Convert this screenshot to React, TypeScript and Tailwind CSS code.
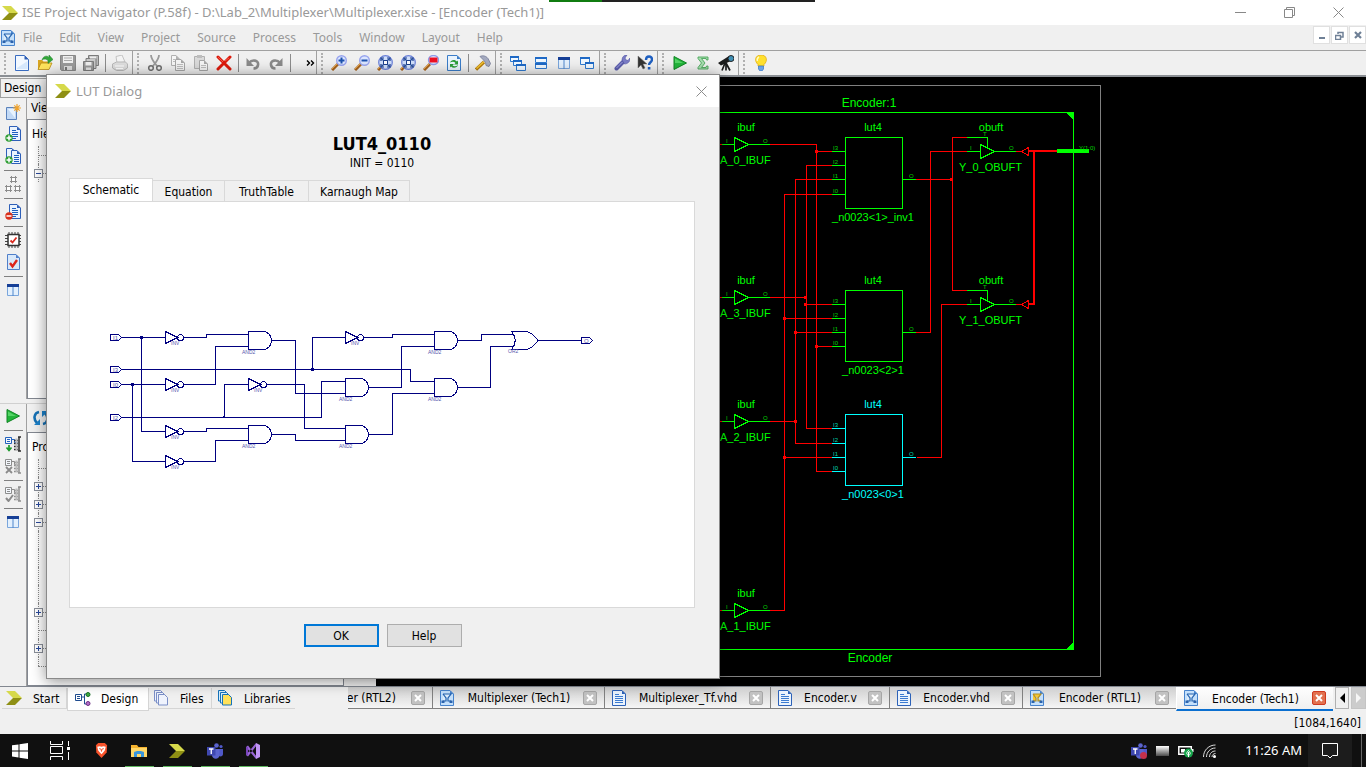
import React from "react";

type Kids = { children?: React.ReactNode };

const UI = "font-['DejaVu_Sans_Condensed','DejaVu_Sans',sans-serif] text-xs";
const SEGOE = "font-['Noto_Sans','Open_Sans',sans-serif]";

/* ---------- icons ---------- */

function Ico({ children, size = 16 }: Kids & { size?: number }) {
  return (
    <svg width={size} height={size} viewBox="0 0 16 16" fill="none" aria-hidden="true" className="shrink-0">
      {children}
    </svg>
  );
}

const Chevron = () => (
  <Ico>
    <path d="M0 1h9l7 7H7z" fill="#d6d94a" />
    <path d="M7 8h9l-7 7H0z" fill="#8e8f14" />
  </Ico>
);

const Page = ({ x = 2, y = 0, w = 12, h = 16, stroke = "#2e5fb8", fill = "#eaf3fd" }) => (
  <>
    <path d={`M${x + 0.5} ${y + 0.5}h${w - 4.5}l3.5 3.5v${h - 4.5}h-${w - 1}z`} fill={fill} stroke={stroke} />
    <path d={`M${x + w - 4} ${y + 0.5}v3.5h3.5z`} fill={stroke} />
  </>
);

const NewFile = () => (
  <Ico>
    <path d="M1.5.5h9l4 4v11h-13z" fill="#f2f8ff" stroke="#3a6cc0" />
    <path d="M3 14h10.500V6L3 13z" fill="#d5e7fb" />
    <path d="M10.500.5v4h4z" fill="#2f5fb5" />
  </Ico>
);
const OpenFile = () => (
  <Ico>
    <path d="M1 14V5h4l1.500 1.500H12V14z" fill="#d9a520" />
    <path d="M1 14.500 4 8h11l-3 6.500z" fill="#ffe45c" stroke="#b88a14" strokeWidth=".8" />
    <path d="M5 5c1-4 5-5 7-2.500V0l4 4.500L11 8.500V5.500C9.500 4 7 3.500 5 5z" fill="#32a83a" stroke="#1d7a28" strokeWidth=".5" />
  </Ico>
);
const Save = () => (
  <Ico>
    <path d="M.5.5h15v15h-14l-1-1z" fill="#9a9a9a" stroke="#888" />
    <path d="M3 1h10v7H3z" fill="#f0f0f0" />
    <path d="M4 3h8M4 5.500h8" stroke="#aaa" />
    <path d="M4 11h8v4H4z" fill="#dcdcdc" />
    <path d="M5 12h2v3H5z" fill="#777" />
  </Ico>
);
const SaveAll = () => (
  <Ico>
    <path d="M5.500.5h10v10h-10z" fill="#bbb" stroke="#7c7c7c" />
    <path d="M3 3.500h10v10H3z" fill="#c9c9c9" stroke="#7c7c7c" />
    <path d="M.5 6.500h10v9H.5z" fill="#999" stroke="#7c7c7c" />
    <path d="M2.500 7h6v3.500h-6zM7 1.500h6v2H7z" fill="#eee" />
    <path d="M3 12.500h5V15H3z" fill="#e2e2e2" />
  </Ico>
);
const Print = () => (
  <Ico>
    <path d="M4 1.500 10 0l3 7-8 1z" fill="#f4f4f4" stroke="#c3c3c3" />
    <path d="m.5 9 4-2h9l2 2v4l-4 2.500h-7L.5 13z" fill="#dedede" stroke="#b9b9b9" />
    <path d="M3 11h9M4 13.500h7" stroke="#fff" />
  </Ico>
);
const Cut = () => (
  <Ico>
    <path d="M4 0c0 4 2 6 6 11M12 0c0 4-2 6-6 11" stroke="#9a9a9a" strokeWidth="1.800" />
    <circle cx="4" cy="13" r="2.300" stroke="#6f6f6f" strokeWidth="1.500" />
    <circle cx="12" cy="13" r="2.300" stroke="#6f6f6f" strokeWidth="1.500" />
  </Ico>
);
const Copy = () => (
  <Ico>
    <Page x={1} y={0} w={9} h={11} stroke="#b0b0b0" fill="#f6f6f6" />
    <Page x={5} y={4} w={10} h={12} stroke="#a6a6a6" fill="#f4f4f4" />
    <path d="M7 9.500h6M7 11.500h6M7 13.500h6M3 4.500h3M3 6.500h2" stroke="#bdbdbd" />
  </Ico>
);
const Paste = () => (
  <Ico>
    <path d="M1.500 1.500h10v12h-10z" fill="#dadada" stroke="#b0b0b0" />
    <path d="M4 0h5v3H4z" fill="#bdbdbd" />
    <Page x={6} y={5} w={9} h={11} stroke="#a6a6a6" fill="#f4f4f4" />
    <path d="M8 10.500h5M8 12.500h5" stroke="#bdbdbd" />
  </Ico>
);
const Delete = () => (
  <Ico>
    <path d="m2 2 12 12M14 2 2 14" stroke="#dc1a0c" strokeWidth="3" strokeLinecap="round" />
    <path d="m2 2 5 5M13 3 9 6" stroke="#f25a4a" strokeWidth="1" />
  </Ico>
);
const Undo = ({ flip = false }) => (
  <Ico>
    <g transform={flip ? "translate(16 0) scale(-1 1)" : undefined}>
      <path d="M4 8c3-4 10-3 9 2-.3 2-2 3.500-4.500 3.500" stroke="#8a8a8a" strokeWidth="2.600" />
      <path d="M1.500 3v8h7.500z" fill="#8a8a8a" />
    </g>
  </Ico>
);
const Zoom = ({ kind }: { kind: "in" | "out" | "fit" | "red" }) => (
  <Ico>
    <path d="m1 15 6-6" stroke="#a8641e" strokeWidth="3" />
    <path d="m1 14 5-5" stroke="#e8a64a" />
    {kind === "fit" ? (
      <>
        <circle cx="8.500" cy="7.500" r="6.800" fill="#cfdefb" stroke="#6a80d8" strokeWidth="1.200" />
        <path d="M4.500 3.500 12.500 11.500M12.500 3.500 4.500 11.500" stroke="#2450a0" strokeWidth="1.300" />
        <path d="M4 6V3H7M10 3h3V6M13 9v3H10M7 12H4V9" stroke="#1c3f8c" strokeWidth="1.200" />
        <path d="M6.500 5.500h4v4h-4z" fill="#fff" stroke="#1c3f8c" />
      </>
    ) : kind === "red" ? (
      <>
        <ellipse cx="10.500" cy="5" rx="5" ry="4.500" fill="#e7ebff" stroke="#8f9be8" strokeWidth="1.400" />
        <path d="M6.500 2.500h8v5h-8z" fill="#ee1022" />
      </>
    ) : (
      <>
        <circle cx="10.500" cy="5.500" r="4.800" fill="#dbe5ff" stroke="#98a4ee" strokeWidth="1.400" />
        <path d={kind === "in" ? "M7.500 5.500h6M10.500 2.500v6" : "M7.500 5.500h6"} stroke="#1c52ae" strokeWidth="2" />
      </>
    )}
  </Ico>
);
const RefreshDoc = () => (
  <Ico>
    <Page x={1} w={14} stroke="#3a7cc8" fill="#e8f3fd" />
    <path d="M4 7.500c1-3 5-3.500 7-1l1-1v4H8l1.500-1.500C8 6.500 6.500 6.500 4 7.500zM12 10c-1 3-5 3.500-7 1.500l-1 1V9h4l-1.500 1.500C8 11.500 10 11.500 12 10z" fill="#2a9d37" />
  </Ico>
);
const Hammer = () => (
  <Ico>
    <path d="M1 14.500 9 7" stroke="#b57b0d" strokeWidth="3.200" />
    <path d="m1.500 13.500 7-6.500" stroke="#f4c632" strokeWidth="1.400" />
    <path d="M5 1.500c3-1.500 6-.5 8 2l2.500 5-1.500 3-3-1-.5-3L8 4.500z" fill="#a4aac0" stroke="#747a94" strokeWidth=".8" />
  </Ico>
);
const Win = ({ x, y, w, h }: { x: number; y: number; w: number; h: number }) => (
  <>
    <path d={`M${x + 0.5} ${y + 0.5}h${w - 1}v${h - 1}h-${w - 1}z`} fill="#f0f8ff" stroke="#2f7ad0" />
    <path d={`M${x} ${y}h${w}v2h-${w}z`} fill="#1e69c6" />
  </>
);
const Cascade = () => (
  <Ico>
    <Win x={0} y={1} w={9} h={6} />
    <Win x={3} y={5} w={9} h={6} />
    <Win x={6} y={9} w={10} h={7} />
  </Ico>
);
const TileH = () => (
  <Ico>
    <Win x={2} y={2} w={12} h={6} />
    <Win x={2} y={8} w={12} h={6} />
  </Ico>
);
const TileV = () => (
  <Ico>
    <path d="M2.500 2.500h11v11h-11z" fill="#e3f0fd" stroke="#7aa6dc" />
    <path d="M2 2h12v3H2z" fill="#163f96" />
    <path d="M8 5v9" stroke="#4f86cc" />
  </Ico>
);
const Floating = () => (
  <Ico>
    <Win x={1} y={2} w={10} h={8} />
    <Win x={6} y={7} w={9} h={7} />
  </Ico>
);
const Wrench = () => (
  <Ico>
    <path d="m2.500 13.500 7-7" stroke="#5d5fae" strokeWidth="4" strokeLinecap="round" />
    <path d="M8 5c0-3 2-5 5-5l-2 3 1 2 2 .5L16 3c.5 3-2 6-5.500 6z" fill="#7a7cc6" stroke="#5355a2" strokeWidth=".6" />
    <path d="m2.500 13 6-6" stroke="#9fa1e0" />
  </Ico>
);
const WhatsThis = () => (
  <Ico>
    <path d="M1 1v12l3-3 2 4 2-1-2-4h4z" fill="#333" stroke="#777" strokeWidth=".5" />
    <path d="M9 5c0-4.500 6-4.500 6-.5 0 3-3 2.500-3 5.500" stroke="#1e5fc0" strokeWidth="2.400" />
    <path d="M10.800 12h2.600v2.500h-2.600z" fill="#1e5fc0" />
  </Ico>
);
const Play = () => (
  <Ico>
    <path d="M2 1.500 14.500 8 2 14.500z" fill="#22b53a" stroke="#118524" />
    <path d="M3 3.500 11 8H3z" fill="#55d467" />
  </Ico>
);
const Sigma = () => (
  <Ico>
    <path d="M3 2h10v3h-1.500L11 3.500H6.500L10 8l-3.500 4.500H11l.5-1.500H13v3H3v-1.500L6.500 8 3 3.500z" fill="#a5dcae" stroke="#4aa65a" strokeWidth=".9" />
  </Ico>
);
const Telescope = () => (
  <Ico>
    <path d="M0 8 11 1l3 4.500L3 10.500z" fill="#1c1c1c" />
    <circle cx="13" cy="3.500" r="3" fill="#3f8fb4" stroke="#222" />
    <path d="m7 8-3 7.500M8 8v7.500M8 8l4 7.500" stroke="#1c1c1c" strokeWidth="1.700" />
  </Ico>
);
const Bulb = () => (
  <Ico>
    <path d="M8 0c6 0 7 6 3 9.500V11H5V9.500C1 6 2 0 8 0z" fill="#ffe02e" stroke="#e3ae17" strokeWidth=".8" />
    <path d="M6 2c-2 1-2 3-1.500 4" stroke="#fffbc2" strokeWidth="1.500" />
    <path d="M5.500 11h5v3L9 16H7l-1.500-2z" fill="#6aa3e6" stroke="#3474c4" strokeWidth=".7" />
  </Ico>
);
const NewSource = () => (
  <Ico>
    <path d="M1.500 3.500h10v12h-10z" fill="#c3daf6" stroke="#5b82bb" />
    <path d="M3 5h7v9z" fill="#e8f3fe" />
    <path d="M12 0v8M8 4h8M9.300 1.300l5.400 5.400M14.700 1.300 9.300 6.700" stroke="#f0a32c" strokeWidth="1.200" />
  </Ico>
);
const Lines = ({ x }: { x: number }) => <path d={`M${x} 4.500h4M${x} 6.500h6M${x} 8.500h6M${x} 10.500h6M${x} 12.500h4`} stroke="#1d5fc0" />;
const Badge = ({ minus = false }) => (
  <>
    <circle cx="4" cy="12" r="3.700" fill={minus ? "#d9301c" : "#2f9e35"} />
    <path d={minus ? "M1.500 12h5" : "M1.500 12h5M4 9.500v5"} stroke="#fff" strokeWidth="1.500" />
  </>
);
const AddSource = () => (
  <Ico>
    <Page x={4} y={0} w={12} h={15} />
    <Lines x={7} />
    <Badge />
  </Ico>
);
const AddCopy = () => (
  <Ico>
    <Page x={1} y={0} w={10} h={13} />
    <Page x={6} y={2} w={10} h={14} />
    <path d="M9 7.500h5M9 9.500h5M9 11.500h5M9 13.500h5" stroke="#1d5fc0" />
    <Badge />
  </Ico>
);
const RemoveSource = () => (
  <Ico>
    <Page x={4} y={0} w={12} h={15} />
    <Lines x={7} />
    <Badge minus />
  </Ico>
);
const Modules = () => (
  <Ico>
    {[[5, 0], [0, 9], [9, 9]].map(([x, y]) => (
      <g key={`${x}-${y}`}>
        <path d={`M${x} ${y + 1.500}h7M${x} ${y + 5.500}h7M${x + 1.500} ${y}v7M${x + 5.500} ${y}v7`} stroke="#8c8c8c" />
        <path d={`M${x + 2} ${y + 2}h3v3h-3z`} fill="#fff" />
      </g>
    ))}
  </Ico>
);
const Chip = () => (
  <Ico>
    <path d="M4 0v16M7 0v16M10 0v16M13 0v16M0 3.500h16M0 6.500h16M0 9.500h16M0 12.500h16" stroke="#444" />
    <path d="M3 2.500h11v11H3z" fill="#fff" stroke="#333" strokeWidth="1.500" />
    <path d="m5.500 8.500 2 2 4-5" stroke="#d92b20" strokeWidth="1.800" />
  </Ico>
);
const CheckDoc = () => (
  <Ico>
    <Page x={2} w={13} stroke="#4f7fca" fill="#d8e8fa" />
    <path d="m5 9 2.500 3.500L12 6" stroke="#dd241b" strokeWidth="2.400" />
  </Ico>
);
const Process = ({ kind }: { kind: "run" | "stop" | "check" }) => {
  const c = kind === "run" ? "#2362bd" : "#8d8d8d";
  const k = kind === "run" ? "#2b2b2b" : "#8d8d8d";
  return (
    <Ico>
      <path d="M.5 1.500h6v6h-6z" fill="#f3f7fc" stroke={c} />
      <path d="M2 3.500h3M2 5.500h3M6.500 3.500h3v3h3" stroke={c} />
      <path d="M13 1h3M13 15h3M9 4.500h4M9 7.500h4M9 10.500h4M9 13.500h4M14 1v14" stroke={k} strokeWidth="1.500" />
      <path d="M11.500 2.500V14" stroke="#bcbcbc" strokeWidth="2" />
      {kind === "run" && <path d="M4 9v5M1.500 11.500 4 14.500l2.500-3" stroke="#1c9a2c" strokeWidth="1.700" />}
      {kind === "stop" && <path d="m1 9 6 6M7 9l-6 6" stroke="#8a8a8a" strokeWidth="1.800" />}
      {kind === "check" && <path d="m1 12 2.500 3L8 9" stroke="#8a8a8a" strokeWidth="2" />}
    </Ico>
  );
};
const Rerun = () => (
  <Ico>
    <path d="M6 2C1 3 0 9 4 13M10 14c5-1 6-7 2-11" stroke="#1671b5" strokeWidth="2.600" />
    <path d="M1 15h6V9zM15 1H9v6z" fill="#1c82cb" />
  </Ico>
);
const SchematicDoc = ({ gold = false }) => (
  <Ico>
    <Page x={1} w={14} stroke="#4783cc" fill="#c4e0fb" />
    <path d="M4 4h8L9 8v3h3M4 4l3 4v3H4" fill={gold ? "#f7c72f" : "#ddecfa"} stroke={gold ? "#b08d28" : "#2463b0"} strokeWidth="1.200" />
    <path d="M2.500 10.500h3V13h-3zM10.500 10.500h3V13h-3z" fill="#2b63ad" />
  </Ico>
);
const TextDoc = () => (
  <Ico>
    <Page x={1} w={14} stroke="#2d62b8" fill="#eaf3fd" />
    <path d="M4 4.500h4M4 6.500h8M4 8.500h8M4 10.500h8M4 12.500h8" stroke="#3c7bd0" />
  </Ico>
);
const Stack = ({ gold = false }) => (
  <Ico>
    {[0, 2, 4].map((o) => (
      <g key={o}>
        <path d={`M${o + 1.5} ${o + 0.5}h6l3 3v7.500h-9z`} fill={gold ? (o === 4 ? "#ffe15a" : "#d8eefc") : "#eff3fd"} stroke={gold ? "#1573bb" : "#7b8fc7"} />
      </g>
    ))}
  </Ico>
);
const DesignIcon = () => (
  <Ico>
    <path d="M.5 3.500h6v6h-6z" fill="#fff" stroke="#1f4c8f" />
    <path d="M2 5.500h3M2 7.500h3M6.500 6h3M9.500 3v10M9.500 3H13M9.500 13H13" stroke="#1f4c8f" />
    <circle cx="13" cy="3.500" r="2" fill="#3faa42" stroke="#186e25" />
    <circle cx="13" cy="12.500" r="2" fill="#b26cc6" stroke="#6d2f83" />
  </Ico>
);

/* ---------- small building blocks ---------- */

function ToolButton({ label, children }: Kids & { label: string }) {
  return (
    <button type="button" aria-label={label} className="flex h-[22px] w-[23px] shrink-0 items-center justify-center">
      {children}
    </button>
  );
}
const VSep = () => (
  <span className="flex w-[6px] shrink-0 justify-center">
    <span className="h-[18px] w-px bg-[#8c8c8c]" />
  </span>
);
const HSep = () => (
  <span className="flex h-[6px] w-full items-center justify-center">
    <span className="h-px w-[19px] bg-[#808080]" />
  </span>
);
function ToolGroup({ children }: Kids) {
  return (
    <div className="flex h-full items-center border-r border-[#a0a0a0] pr-px">
      <span className="flex w-[10px] shrink-0 justify-center">
        <span className="h-[21px] border-l-2 border-dotted border-[#b0b0b0]" />
      </span>
      {children}
    </div>
  );
}

type Node = "plus" | "minus" | "leaf" | "line" | "last";
function Tree({ nodes }: { nodes: Node[] }) {
  return (
    <ul className="pl-[6px]">
      {nodes.map((n, i) => (
        <li key={i} className="relative flex h-[18px] w-[60px] items-center">
          <span className={`absolute left-1 top-0 border-l border-dotted border-[#8a8a8a] ${n === "last" ? "h-1/2" : "h-full"}`} />
          {n !== "line" && <span className="absolute left-1 top-1/2 w-8 border-t border-dotted border-[#8a8a8a]" />}
          {(n === "plus" || n === "minus") && (
            <button
              type="button"
              aria-label={n === "plus" ? "Expand" : "Collapse"}
              className="relative flex size-[9px] items-center justify-center border border-[#8a8f99] bg-white"
            >
              <svg width="5" height="5" viewBox="0 0 5 5" shapeRendering="crispEdges">
                <path d={n === "plus" ? "M0 2.500h5M2.500 0v5" : "M0 2.500h5"} stroke="#2a4a9c" />
              </svg>
            </button>
          )}
        </li>
      ))}
    </ul>
  );
}

/* ---------- Encoder schematic ---------- */

const GREEN = "#00ff00";
const CYAN = "#00ffff";
const RED = "#ff0000";

function Pin({ x, y, t, c = "#00d000" }: { x: number; y: number; t: string; c?: string }) {
  return (
    <text x={x} y={y} fontSize="6" fill={c}>
      {t}
    </text>
  );
}
function Ibuf({ y, name }: { y: number; name: string }) {
  return (
    <g>
      <path d={`M722 ${y}h12M734.500 ${y - 7}v14l14-7zM748 ${y}h22`} stroke={GREEN} />
      <path d={`M719 ${y}h3`} stroke={RED} />
      <Pin x={726} y={y - 2} t="I" />
      <Pin x={763} y={y - 2} t="O" />
      <text x="746" y={y - 13.500} fontSize="11" textAnchor="middle" fill={GREEN}>ibuf</text>
      <text x="720" y={y + 19.500} fontSize="11" fill={GREEN}>{name}</text>
    </g>
  );
}
function Lut({ y, ports, name, c = GREEN }: { y: number; ports: number[]; name: string; c?: string }) {
  const dim = c === CYAN ? "#00d8b0" : undefined;
  return (
    <g>
      <path d={`M845.500 ${y}h57v71h-57zM902 ${ports[2]}h14`} stroke={c} />
      {ports.map((p, i) => (
        <g key={p}>
          <path d={`M832 ${p}h13`} stroke={c} />
          <Pin x={833} y={p - 1.500} t={`I${3 - i}`} c={dim} />
        </g>
      ))}
      <Pin x={909} y={ports[2] - 1.500} t="O" c={dim} />
      <text x="873" y={y - 6.500} fontSize="11" textAnchor="middle" fill={c}>lut4</text>
      <text x="873" y={y + 83.500} fontSize="11" textAnchor="middle" fill={c}>{name}</text>
    </g>
  );
}
function Obuft({ y, name }: { y: number; name: string }) {
  return (
    <g>
      <path d={`M967 ${y - 14}h20.500v11M967 ${y}h13M980.500 ${y - 7}v14l14-7zM994 ${y}h22`} stroke={GREEN} />
      <path d={`M1016 ${y}h6M1028.500 ${y - 4}v8l-7-4z`} stroke={RED} />
      <Pin x={970} y={y - 1.500} t="I" />
      <Pin x={1009} y={y - 1.500} t="O" />
      <Pin x={983} y={y - 15.500} t="T" />
      <text x="991" y={y - 20.500} fontSize="11" textAnchor="middle" fill={GREEN}>obuft</text>
      <text x="990.500" y={y + 19.500} fontSize="11" textAnchor="middle" fill={GREEN}>{name}</text>
    </g>
  );
}
function EncoderSchematic() {
  const dots = [[816, 151], [805, 297], [805, 304], [784, 318], [795, 332], [816, 346], [795, 421], [784, 457], [951, 179]];
  return (
    <svg width="990" height="609" viewBox="376 77 990 609" fill="none" shapeRendering="crispEdges" className="block font-['Liberation_Sans',sans-serif]" role="img" aria-label="Encoder technology schematic">
      <path d="M376 85.500h724.500v591H376" stroke="#808080" />
      <path d="M376 112.500h697.500v537H376" stroke={GREEN} />
      <path d="M1065 112h9v9zM1065 650h9v-9z" fill={GREEN} />
      <text x="869" y="107" fontSize="12" textAnchor="middle" fill={GREEN}>Encoder:1</text>
      <text x="870" y="662" fontSize="12" textAnchor="middle" fill={GREEN}>Encoder</text>
      <path
        stroke={RED}
        d="M770 144.500h46.500v327H832M816.500 151.500H832M816.500 346.500H832
           M770 297.500h36M832 165.500h-25.500v263H832M806.500 304.500H832
           M770 421.500h25.500M832 179.500h-36.500v264H832M795.500 332.500H832
           M770 610.500h14.500v-416H832M784.500 318.500H832M784.500 457.500H832
           M916 179.500h36M967 137.500h-14.500v153H967
           M916 332.500h14.500v-181H967M917 457.500h24.500v-153H967"
      />
      <path d="M1028 151h31M1034 151v153.500M1028 304h6" stroke={RED} strokeWidth="2" />
      {dots.map(([x, y]) => (
        <rect key={`${x}-${y}`} x={x - 1} y={y - 1} width="3" height="3" fill={RED} />
      ))}
      <rect x="1057" y="149" width="32" height="4" fill={GREEN} />
      <Pin x={1079} y={150} t="Y(1:0)" />
      <Ibuf y={144.5} name="A_0_IBUF" />
      <Ibuf y={297.5} name="A_3_IBUF" />
      <Ibuf y={421.5} name="A_2_IBUF" />
      <Ibuf y={610.5} name="A_1_IBUF" />
      <Lut y={137.5} ports={[151.5, 165.5, 179.5, 194.5]} name="_n0023<1>_inv1" />
      <Lut y={290.5} ports={[304.5, 318.5, 332.5, 346.5]} name="_n0023<2>1" />
      <Lut y={414.5} ports={[428.5, 443.5, 457.5, 471.5]} name="_n0023<0>1" c={CYAN} />
      <Obuft y={151.5} name="Y_0_OBUFT" />
      <Obuft y={304.5} name="Y_1_OBUFT" />
    </svg>
  );
}

/* ---------- LUT gate schematic ---------- */

const NAVY = "#000080";
const PALE = "#5656ac";

function GateText({ x, y, t, size = 5 }: { x: number; y: number; t: string; size?: number }) {
  return (
    <text x={x} y={y} fontSize={size} fill={PALE}>
      {t}
    </text>
  );
}
function Port({ x, y, t }: { x: number; y: number; t: string }) {
  return (
    <g>
      <path d={`M${x + 0.5} ${y - 3}h8l3 3-3 3h-8z`} />
      <g stroke="none">
        <GateText x={x + 3} y={y + 2} t={t} size={6} />
      </g>
    </g>
  );
}
function Inv({ x, y }: { x: number; y: number }) {
  return (
    <g>
      <path d={`M${x + 0.5} ${y - 6}v12l12-6z`} />
      <circle cx={x + 15.5} cy={y} r="3" />
      <g stroke="none">
        <GateText x={x + 6} y={y + 7} t="INV" />
      </g>
    </g>
  );
}
function And({ x, y }: { x: number; y: number }) {
  return (
    <g>
      <path d={`M${x + 0.5} ${y - 9}h14.500c5 0 8.500 4 8.500 9s-3.500 9-8.500 9h-14.500z`} />
      <g stroke="none">
        <GateText x={x - 6} y={y + 13} t="AND2" />
      </g>
    </g>
  );
}
function LutSchematic() {
  return (
    <svg width="624" height="405" viewBox="70 203 624 405" fill="none" stroke={NAVY} shapeRendering="crispEdges" className="block font-['Liberation_Sans',sans-serif]" role="img" aria-label="Gate level schematic of the lookup table">
      <path
        d="M121 338.500h44M141.500 338.500v94H165M121 370.500h289.500v12H434M312.500 370.500v-32H345
           M121 385.500h44M132.500 385.500v77H165M121 418.500h200.500v-36H345M224.500 418.500v-33H248
           M184 338.500h22.500v-3H248M184 385.500h31.500v-38H248M272 341.500h23.500v53H345
           M184 432.500h22.500v-3H248M184 462.500h31.500v-21H248M272 435.500h23.500v6H345
           M267 385.500h37.500v44H345M369 388.500h32.500v-41H434M369 435.500h23.500v-41H434
           M364 338.500h28.500v-3H434M458 341.500h23.500v-6H514M458 388.500h32.500v-41H514M538 341.500h43"
      />
      <path d="M511.500 332.500h13c6 0 10 4 13.500 9-3.500 5-7.500 9-13.500 9h-13c5-6 5-12 0-18z" />
      <g fill={NAVY} stroke="none">
        <path d="M140 337h3v3h-3zM131 384h3v3h-3zM311 369h3v3h-3zM223 417h2v2h-2z" />
      </g>
      <Port x={110} y={338.5} t="I1" />
      <Port x={110} y={370.5} t="I3" />
      <Port x={110} y={385.5} t="I0" />
      <Port x={110} y={418.5} t="I2" />
      <Port x={581} y={341.5} t="O" />
      <Inv x={165} y={338.5} />
      <Inv x={165} y={385.5} />
      <Inv x={165} y={432.5} />
      <Inv x={165} y={462.5} />
      <Inv x={248} y={385.5} />
      <Inv x={345} y={338.5} />
      <And x={248} y={341.5} />
      <And x={248} y={435.5} />
      <And x={345} y={388.5} />
      <And x={345} y={435.5} />
      <And x={434} y={341.5} />
      <And x={434} y={388.5} />
      <g stroke="none">
        <GateText x={508} y={354} t="OR2" />
      </g>
    </svg>
  );
}

function LutDialog() {
  const tab = "h-[21px] border border-b-0 border-l-0 border-[#d9d9d9] bg-[#f0f0f0] pt-px";
  return (
    <section role="dialog" aria-label="LUT Dialog" className="absolute left-[46px] top-[74px] flex w-[674px] flex-col border border-[#8a8a8a] bg-[#f0f0f0] shadow-[0_2px_14px_rgba(0,0,0,0.45)]">
      <header className="flex h-8 items-center bg-white pl-2 pr-3 text-[#999999]">
        <Chevron />
        <h2 className={`${SEGOE} ml-[5px] flex-1 pt-px text-[13px]`}>LUT Dialog</h2>
        <button type="button" aria-label="Close dialog">
          <svg width="11" height="11" viewBox="0 0 11 11">
            <path d="m.5.5 10 10M10.500.5l-10 10" stroke="#8c8c8c" />
          </svg>
        </button>
      </header>
      <div className={`${UI} flex flex-col pb-[31px] pl-[22px] pr-6 pt-[27px]`}>
        <h3 className="text-center text-lg font-bold leading-5">LUT4_0110</h3>
        <p className="pt-px text-center leading-4">INIT = 0110</p>
        <div role="tablist" className="mt-[7px] flex items-end">
          <button type="button" role="tab" aria-selected="true" className="-mb-px h-[24px] w-[84px] border border-b-0 border-[#d9d9d9] bg-white pb-px">Schematic</button>
          <button type="button" role="tab" className={`${tab} w-[72px]`}>Equation</button>
          <button type="button" role="tab" className={`${tab} w-[84px]`}>TruthTable</button>
          <button type="button" role="tab" className={`${tab} w-[101px]`}>Karnaugh Map</button>
        </div>
        <div role="tabpanel" className="overflow-hidden border border-[#d9d9d9] bg-white">
          <LutSchematic />
        </div>
        <div className="mt-4 flex justify-center gap-2 pl-px">
          <button type="button" className="h-[23px] w-[75px] border-2 border-[#0078d7] bg-[#e1e1e1]">OK</button>
          <button type="button" className="h-[23px] w-[75px] border border-[#adadad] bg-[#e1e1e1]">Help</button>
        </div>
      </div>
    </section>
  );
}

/* ---------- window chrome ---------- */

const MENUS = ["File", "Edit", "View", "Project", "Source", "Process", "Tools", "Window", "Layout", "Help"];

function TitleBar() {
  return (
    <header className={`${SEGOE} flex h-[25px] items-center bg-white pl-[2px] pr-[22px] text-[#999999]`}>
      <Chevron />
      <h1 className="ml-1 flex-1 pt-px text-[13px]">ISE Project Navigator (P.58f) - D:\Lab_2\Multiplexer\Multiplexer.xise - [Encoder (Tech1)]</h1>
      <div className="flex gap-[38px]">
        <button type="button" aria-label="Minimize">
          <svg width="11" height="11" viewBox="0 0 11 11"><path d="M0 5.500h11" stroke="#888" /></svg>
        </button>
        <button type="button" aria-label="Restore">
          <svg width="11" height="11" viewBox="0 0 11 11" fill="none"><path d="M.5 2.500h8v8h-8zM2.500 2V.5h8v8H9" stroke="#888" /></svg>
        </button>
        <button type="button" aria-label="Close">
          <svg width="11" height="11" viewBox="0 0 11 11"><path d="m.5.5 10 10M10.500.5l-10 10" stroke="#888" /></svg>
        </button>
      </div>
    </header>
  );
}

function MenuBar() {
  const box = "flex h-[18px] w-[17px] items-center justify-center border border-[#e0e0e0] bg-white";
  return (
    <nav className={`${SEGOE} flex h-[25px] items-center bg-[#f0f0f0] text-xs text-[#999999]`}>
      <span className="flex w-[23px] justify-center pr-[7px]"><SchematicDoc /></span>
      <div className="flex flex-1 gap-[17px]">
        {MENUS.map((m) => (
          <button key={m} type="button">{m}</button>
        ))}
      </div>
      <div className="mb-[5px] flex gap-px">
        <button type="button" aria-label="Minimize document" className={box}>
          <svg width="8" height="8" viewBox="0 0 8 8"><path d="M1 6h6v2H1z" fill="#6f8096" /></svg>
        </button>
        <button type="button" aria-label="Restore document" className={box}>
          <svg width="9" height="9" viewBox="0 0 9 9" fill="none"><path d="M.5 4.500h5v4h-5zM3 3V1.500h5V6H6" stroke="#6f8096" strokeWidth="1.500" /></svg>
        </button>
        <button type="button" aria-label="Close document" className={box}>
          <svg width="8" height="8" viewBox="0 0 8 8"><path d="m1 1 6 6M7 1 1 7" stroke="#6f8096" strokeWidth="2.200" /></svg>
        </button>
      </div>
    </nav>
  );
}

function ToolBar() {
  return (
    <div role="toolbar" className="flex h-[27px] border-b-2 border-t border-b-[#8b8f94] border-t-[#a0a0a0] bg-[#f0f0f0]">
      <ToolGroup>
        <ToolButton label="New"><NewFile /></ToolButton>
        <ToolButton label="Open"><OpenFile /></ToolButton>
        <ToolButton label="Save"><Save /></ToolButton>
        <ToolButton label="Save All"><SaveAll /></ToolButton>
        <VSep />
        <ToolButton label="Print"><Print /></ToolButton>
      </ToolGroup>
      <ToolGroup>
        <ToolButton label="Cut"><Cut /></ToolButton>
        <ToolButton label="Copy"><Copy /></ToolButton>
        <ToolButton label="Paste"><Paste /></ToolButton>
        <ToolButton label="Delete"><Delete /></ToolButton>
        <VSep />
        <ToolButton label="Undo"><Undo /></ToolButton>
        <ToolButton label="Redo"><Undo flip /></ToolButton>
        <VSep />
        <button type="button" aria-label="More tools" className="flex w-[22px] justify-end">
          <svg width="9" height="6" viewBox="0 0 9 6" fill="none"><path d="m1 .5 2.500 2.500L1 5.500M5 .5 7.500 3 5 5.500" stroke="#000" strokeWidth="1.400" /></svg>
        </button>
      </ToolGroup>
      <ToolGroup>
        <ToolButton label="Zoom In"><Zoom kind="in" /></ToolButton>
        <ToolButton label="Zoom Out"><Zoom kind="out" /></ToolButton>
        <ToolButton label="Zoom to Full View"><Zoom kind="fit" /></ToolButton>
        <ToolButton label="Zoom to Selected"><Zoom kind="fit" /></ToolButton>
        <ToolButton label="Zoom to Box"><Zoom kind="red" /></ToolButton>
        <ToolButton label="Refresh"><RefreshDoc /></ToolButton>
        <VSep />
        <ToolButton label="Build"><Hammer /></ToolButton>
      </ToolGroup>
      <ToolGroup>
        <ToolButton label="Cascade"><Cascade /></ToolButton>
        <ToolButton label="Tile Horizontally"><TileH /></ToolButton>
        <ToolButton label="Tile Vertically"><TileV /></ToolButton>
        <ToolButton label="Float"><Floating /></ToolButton>
      </ToolGroup>
      <ToolGroup>
        <ToolButton label="Preferences"><Wrench /></ToolButton>
        <ToolButton label="What's This"><WhatsThis /></ToolButton>
      </ToolGroup>
      <ToolGroup>
        <ToolButton label="Run"><Play /></ToolButton>
        <ToolButton label="Summary"><Sigma /></ToolButton>
        <ToolButton label="Find"><Telescope /></ToolButton>
      </ToolGroup>
      <div className="flex h-full items-center">
        <span className="flex w-[10px] shrink-0 justify-center">
          <span className="h-[21px] border-l-2 border-dotted border-[#b0b0b0]" />
        </span>
        <ToolButton label="Tips"><Bulb /></ToolButton>
      </div>
    </div>
  );
}

function SidePanels() {
  return (
    <aside className={`${UI} flex w-[376px] shrink-0 flex-col bg-[#f0f0f0] pr-8`}>
      <h2 className="mt-px h-[20px] border border-[#a0a0a0] pl-[3px] leading-[18px]">Design</h2>
      <div className="flex h-[301px]">
        <div className="flex w-[27px] shrink-0 flex-col items-center border-r border-[#a0a0a0] pt-[3px]">
          <ToolButton label="New Source"><NewSource /></ToolButton>
          <ToolButton label="Add Source"><AddSource /></ToolButton>
          <ToolButton label="Add Copy of Source"><AddCopy /></ToolButton>
          <HSep />
          <ToolButton label="Modules"><Modules /></ToolButton>
          <HSep />
          <ToolButton label="Remove"><RemoveSource /></ToolButton>
          <HSep />
          <ToolButton label="Design Goals"><Chip /></ToolButton>
          <ToolButton label="Project Check"><CheckDoc /></ToolButton>
          <HSep />
          <ToolButton label="Properties"><TileV /></ToolButton>
        </div>
        <div className="flex min-w-0 flex-1 flex-col">
          <p className="h-[21px] pl-1 leading-[21px]">View:</p>
          <div className="flex-1 border border-[#828790] bg-white">
            <p className="h-[26px] pl-1 leading-[28px]">Hierarchy</p>
            <Tree nodes={["leaf", "minus"]} />
          </div>
        </div>
      </div>
      <div className="mt-1 flex flex-1 border-t border-[#d0d0d0]">
        <div className="flex w-[27px] shrink-0 flex-col items-center border-r border-[#a0a0a0] pt-px">
          <ToolButton label="Run Process"><Play /></ToolButton>
          <HSep />
          <ToolButton label="Run All"><Process kind="run" /></ToolButton>
          <ToolButton label="Stop"><Process kind="stop" /></ToolButton>
          <HSep />
          <ToolButton label="Mark Done"><Process kind="check" /></ToolButton>
          <HSep />
          <ToolButton label="Process Properties"><TileV /></ToolButton>
        </div>
        <div className="flex min-w-0 flex-1 flex-col">
          <div className="flex h-[28px] items-center pl-[6px]"><Rerun /></div>
          <div className="flex-1 border border-[#828790] bg-white">
            <p className="h-[26px] pl-1 leading-[28px]">Processes</p>
            <Tree nodes={["leaf", "plus", "plus", "minus", "line", "line", "line", "line", "plus", "leaf", "plus", "last"]} />
          </div>
        </div>
      </div>
    </aside>
  );
}

function CloseBox({ active = false, label }: { active?: boolean; label: string }) {
  return (
    <button
      type="button"
      aria-label={label}
      className={`flex size-[14px] shrink-0 items-center justify-center rounded-[2px] border ${active ? "border-[#cf3a20] bg-[#e2714f]" : "border-[#a6a6a6] bg-[#c2c2c2]"}`}
    >
      <svg width="8" height="8" viewBox="0 0 8 8"><path d="m1 1 6 6M7 1 1 7" stroke="#fff" strokeWidth="2" /></svg>
    </button>
  );
}

const DOCS: { name: string; width: string; icon: React.ReactNode; active?: boolean }[] = [
  { name: "Multiplexer (RTL2)", width: "w-[172px]", icon: <SchematicDoc gold /> },
  { name: "Multiplexer (Tech1)", width: "w-[172px]", icon: <SchematicDoc /> },
  { name: "Multiplexer_Tf.vhd", width: "w-[166px]", icon: <TextDoc /> },
  { name: "Encoder.v", width: "w-[119px]", icon: <TextDoc /> },
  { name: "Encoder.vhd", width: "w-[133px]", icon: <TextDoc /> },
  { name: "Encoder (RTL1)", width: "w-[154px]", icon: <SchematicDoc gold /> },
  { name: "Encoder (Tech1)", width: "w-[157px]", icon: <SchematicDoc />, active: true },
];

function BottomTabs() {
  const item = "flex h-[21px] items-center border-b border-r border-[#d5d5d5] bg-[#f0f0f0]";
  return (
    <div className={`${UI} flex h-[26px] items-start border-t border-[#828790] bg-[#f0f0f0]`}>
      <div className="flex w-[346px] shrink-0 items-start pl-[2px] pt-px">
        <button type="button" className={`${item} w-[65px] gap-[11px] pl-[4px]`}><Chevron /><span className="pt-px">Start</span></button>
        <button type="button" className="flex h-[23px] w-[82px] items-center gap-[10px] border border-t-0 border-[#d5d5d5] bg-white pl-[7px]"><DesignIcon /><span>Design</span></button>
        <button type="button" className={`${item} w-[63px] gap-[11px] pl-[4px]`}><Stack /><span className="pt-px">Files</span></button>
        <button type="button" className={`${item} w-[83px] gap-[11px] border-r-0 pl-[5px]`}><Stack gold /><span className="pt-px">Libraries</span></button>
      </div>
      <div className="ml-[2px] flex min-w-0 flex-1 items-start justify-end overflow-hidden">
        {DOCS.map((d) => (
          <div
            key={d.name}
            className={`flex shrink-0 items-center border-l pl-[6px] pr-[7px] ${d.width} ${
              d.active
                ? "h-[24px] border-b-2 border-b-[#0a6fd0] border-l-white bg-gradient-to-b from-[#fefefe] to-[#f0f0f0]"
                : "h-[22px] border-b border-b-[#808080] border-l-[#808080] bg-gradient-to-b from-[#cfcfcf] to-[#f6f6f6]"
            }`}
          >
            {d.icon}
            <button type="button" className="flex-1 pt-px text-center">{d.name}</button>
            <CloseBox active={d.active} label={`Close ${d.name}`} />
          </div>
        ))}
      </div>
      <div className="flex shrink-0 gap-[2px] pl-[2px]">
        <button type="button" aria-label="Scroll tabs left" className="flex h-[22px] w-[14px] items-center justify-center border border-[#b0b0b0]">
          <svg width="5" height="10" viewBox="0 0 5 10"><path d="M5 0v10L0 5z" fill="#000" /></svg>
        </button>
        <button type="button" aria-label="Scroll tabs right" className="flex h-[22px] w-[15px] items-center justify-center border border-[#c4c4c4] bg-[#cccccc]">
          <svg width="5" height="10" viewBox="0 0 5 10"><path d="M0 0v10l5-5z" fill="#f6f6f6" /></svg>
        </button>
      </div>
    </div>
  );
}

function TaskButton({ label, running, children }: Kids & { label: string; running?: boolean }) {
  return (
    <button type="button" aria-label={label} className="flex w-[38px] flex-col items-center">
      <span className="flex flex-1 items-center pt-px">{children}</span>
      <span className={`h-px w-[29px] ${running ? "bg-[#5fb760]" : "bg-transparent"}`} />
    </button>
  );
}

const TeamsMark = () => (
  <>
    <circle cx="9.500" cy="2.500" r="2.300" fill="#5b64cf" />
    <circle cx="14" cy="3.500" r="1.600" fill="#5059c9" />
    <path d="M11 6h5v5c0 2-2 3-4 2z" fill="#5059c9" />
    <path d="M5 6h7.500v6c0 5-7.500 5-7.500 0z" fill="#5b64cf" />
    <path d="M0 4h8.500v8.500H0z" fill="#3f48b0" />
    <path d="M2 6h4.500M4.250 6v5" stroke="#fff" strokeWidth="1.300" />
  </>
);

function TaskBar() {
  return (
    <footer className={`${SEGOE} flex h-[33px] bg-[#101010] text-[13px] text-white`}>
      <button type="button" aria-label="Start menu" className="flex w-[40px] items-center justify-center">
        <Ico><path d="m0 2.300 6.500-.9v6H0zM7.500 1.200 16 0v7.400H7.500zM0 8.500h6.500v6L0 13.600zM7.500 8.500H16V16l-8.500-1.200z" fill="#fff" /></Ico>
      </button>
      <button type="button" aria-label="Task view" className="flex w-[42px] items-center justify-center pr-[2px]">
        <svg width="20" height="19" viewBox="0 0 20 19" fill="none"><path d="M.5 0v3.500h12V0M.5 5.500h12v7H.5zM.5 19v-3.500h12V19M18.500 0v5M18.500 11v8" stroke="#fff" /><path d="M17 6h3v3h-3z" fill="#fff" /></svg>
      </button>
      <TaskButton label="Brave">
        <Ico size={15}>
          <path d="M4.500 0h7L14 2.500 13.500 10 8 16 2.500 10 2 2.500z" fill="#f8532b" />
          <path d="m3.500 4 2.500-.5 2 .5 2-.5 2.500.5-1 4-2 2.500L8 12l-1.500-1.500-2-2.500z" fill="#fff" />
          <path d="m5.500 6 2 .5L8 9l.5-2.500 2-.5" stroke="#f8532b" />
        </Ico>
      </TaskButton>
      <TaskButton label="File Explorer" running>
        <Ico>
          <path d="M0 2h6l1.500 2H16v10H0z" fill="#f5b32e" />
          <path d="M0 5h16v9H0z" fill="#ffd768" />
          <path d="M3 14V9.500C3 7.500 13 7.500 13 9.500V14h-3v-3H6v3z" fill="#3a96dd" />
        </Ico>
      </TaskButton>
      <TaskButton label="ISE Project Navigator" running><Chevron /></TaskButton>
      <TaskButton label="Teams" running><Ico><TeamsMark /></Ico></TaskButton>
      <TaskButton label="Visual Studio" running>
        <Ico>
          <path d="m1 4 2-1.500L12 14l-1 2zM1 12l2 1.500L12 2l-1-2z" fill="#9a66d8" />
          <path d="M1 4h2v8.500L1 12z" fill="#7a45bd" />
          <path d="m11 0 4 2v12l-4 2z" fill="#c095f5" />
        </Ico>
      </TaskButton>
      <div className="ml-auto flex items-center">
        <span className="flex w-[94px] items-center justify-between pl-px pr-[8px]">
          <Ico><TeamsMark /><circle cx="12.500" cy="12.500" r="3.500" fill="#c4314b" /></Ico>
          <svg width="13" height="10" viewBox="0 0 13 10">
            <defs><linearGradient id="tray" x2="0" y2="1"><stop stopColor="#fff" /><stop offset="1" stopColor="#4a4a4a" /></linearGradient></defs>
            <path d="M0 0h13v10H0z" fill="url(#tray)" />
          </svg>
          <svg width="16" height="14" viewBox="0 0 16 14" fill="none">
            <path d="M.8 2.800h12.500v7.500H.8z" stroke="#fff" strokeWidth="1.500" />
            <path d="M3 5h4v3.500H3zM14 5h1.500v3H14z" fill="#fff" />
            <circle cx="10.500" cy="9" r="4.500" fill="#16a34a" />
            <path d="M10.500 6.500c3 3 1.500 4.500 0 4.500s-3-1.500 0-4.500zM10.500 8v5" stroke="#fff" />
          </svg>
          <svg width="13" height="14" viewBox="0 0 13 14" fill="none">
            <path d="M.5 13C.5 6 6 1 12.500 1M3.500 13c0-5 4-9 9-9M6.500 13c0-3.500 2.500-6 6-6M9 13c0-2 1.500-3.500 3.500-3.500" stroke="#ddd" />
            <circle cx="11.500" cy="12.500" r="1.500" fill="#fff" />
          </svg>
        </span>
        <time className="pl-[21px] pr-[6px] pt-px">11:26 AM</time>
        <button type="button" aria-label="Notifications" className="flex h-full w-[44px] items-center justify-center bg-[#1c1c1c]">
          <svg width="16" height="16" viewBox="0 0 16 16" fill="none"><path d="M.5.500h15v12h-5L8 15l-2.500-2.500h-5z" stroke="#fff" /></svg>
        </button>
        <span className="ml-[9px] mr-1 h-full w-px bg-[#666666]" />
      </div>
    </footer>
  );
}

export default function App() {
  return (
    <div className="relative flex min-h-screen flex-col overflow-hidden bg-[#f0f0f0] text-black">
      <TitleBar />
      <MenuBar />
      <ToolBar />
      <main className="flex flex-1">
        <SidePanels />
        <div className="min-w-0 flex-1 overflow-hidden bg-black">
          <EncoderSchematic />
        </div>
      </main>
      <BottomTabs />
      <div className={`${UI} h-[22px] pr-[5px] text-right leading-[22px]`}>[1084,1640]</div>
      <TaskBar />
      <LutDialog />
      <span className="absolute left-[549px] top-0 h-[2px] w-[266px] border-l-[53px] border-[#107c10] bg-[#222222]" />
    </div>
  );
}
